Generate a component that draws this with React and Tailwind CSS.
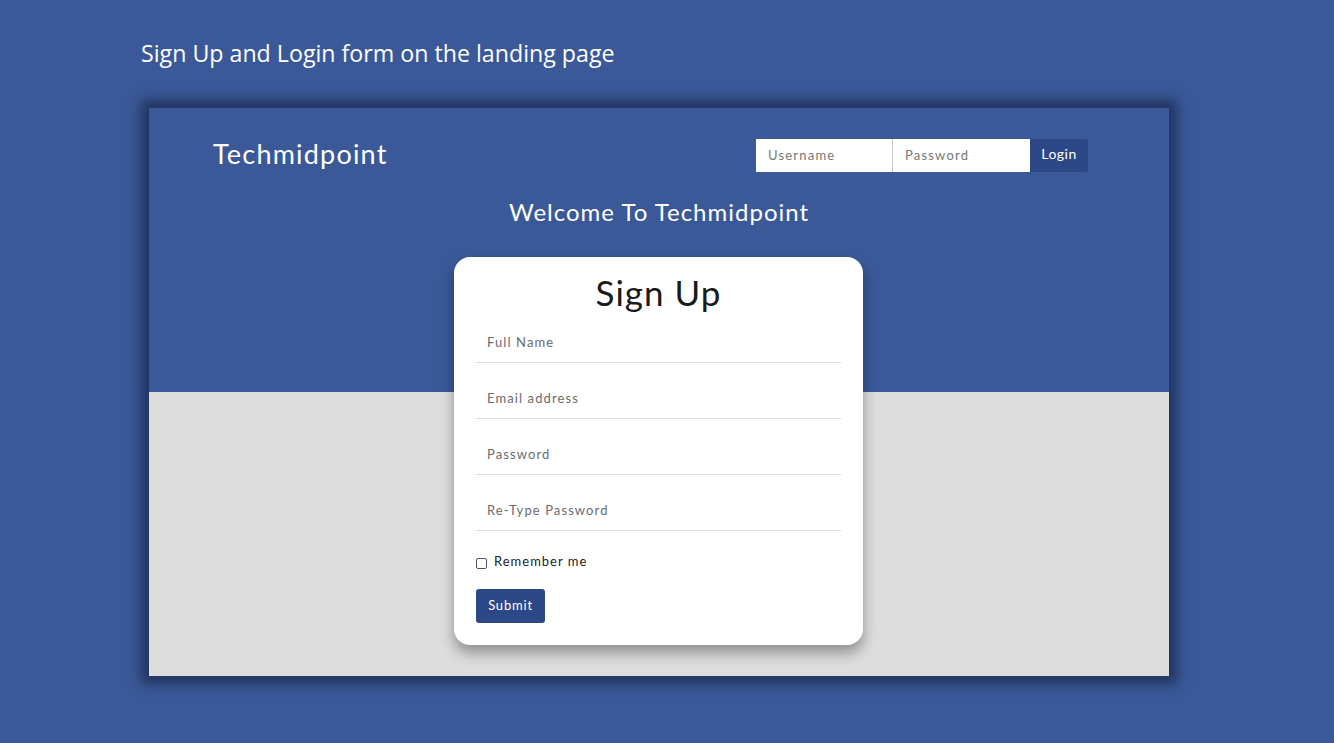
export default function App() {
  return (
    <div className="w-[1334px] h-[743px] bg-[#3b5998] overflow-hidden">
      <div className="pt-[36px] pl-[141px] h-[108px]">
        <p className="text-white text-[23.2px] leading-[34px]" style={{ fontFamily: '"Open Sans", sans-serif' }}>
          Sign Up and Login form on the landing page
        </p>
      </div>
      <div
        className="ml-[149px] w-[1020px] h-[568px] bg-[linear-gradient(#3b5998_0_284px,#dddddd_284px)] shadow-[0_0_12px_8px_rgba(28,42,80,0.8)] flex flex-col"
        style={{ fontFamily: 'Lato, "Open Sans", sans-serif' }}
      >
        <div className="flex justify-between items-start pl-[64px] pr-[81px] pt-[31px]">
          <div className="text-white text-[27px] leading-[30px] tracking-[1.2px]">Techmidpoint</div>
          <div className="flex h-[33px]">
            <div className="w-[137px] bg-white border-r border-[#c9c9c9] flex items-center pl-[12px] text-[13px] tracking-[1.2px] text-[#777]">Username</div>
            <div className="w-[137px] bg-white flex items-center pl-[12px] text-[13px] tracking-[1.2px] text-[#777]">Password</div>
            <button className="w-[58px] bg-[#2c4886] rounded-r-[3px] text-white text-[14px] tracking-[0.5px] flex items-center justify-center pb-[4px]">Login</button>
          </div>
        </div>
        <div className="text-center text-white text-[24px] leading-[30px] tracking-[1px] mt-[25px]">Welcome To Techmidpoint</div>
        <div className="ml-[305px] mt-[30px] w-[409px] bg-white rounded-[16px] shadow-[0_8px_14px_rgba(0,0,0,0.35)] px-[22px] pt-[15px] pb-[22px]">
          <h1 className="text-center text-[35px] leading-[40px] tracking-[1px] text-[#1a1a1a] mb-[11px]">Sign Up</h1>
          {['Full Name', 'Email address', 'Password', 'Re-Type Password'].map((p) => (
            <div key={p} className="h-[40px] border-b border-[#dcdcdc] flex items-center pl-[11px] text-[13px] tracking-[1.1px] text-[#6b6b6b] mb-[16px]">
              {p}
            </div>
          ))}
          <div className="flex items-center mt-[23px] h-[16px]">
            <span className="w-[11px] h-[11px] border border-[#555] rounded-[2px] bg-white mt-[3px]"></span>
            <span className="ml-[7px] text-[13px] tracking-[1px] text-[#222]">Remember me</span>
          </div>
          <button className="mt-[19px] w-[69px] h-[34px] bg-[#2c4886] rounded-[3px] text-white text-[13px] tracking-[0.8px] flex items-center justify-center">Submit</button>
        </div>
      </div>
    </div>
  );
}
